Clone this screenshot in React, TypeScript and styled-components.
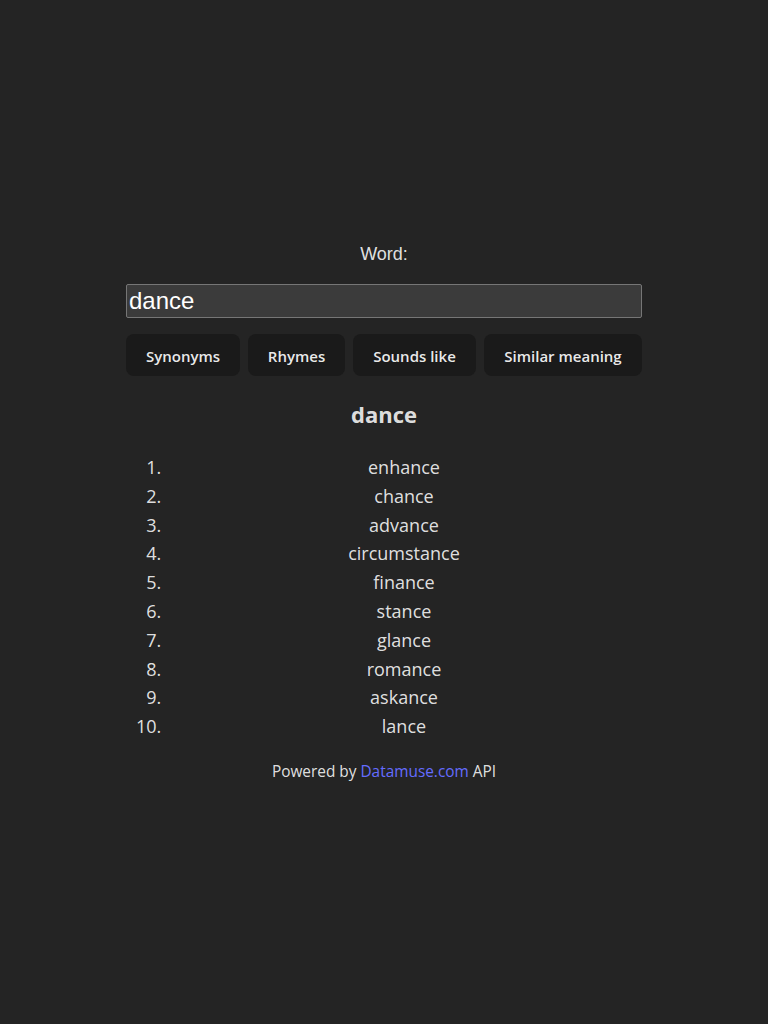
import React from "react";
import styled, { createGlobalStyle } from "styled-components";

const Global = createGlobalStyle`
  html, body { margin: 0; padding: 0; }
  body {
    background: #242424;
    color: rgba(255,255,255,0.87);
    font-family: "Open Sans", "Noto Sans", sans-serif;
    line-height: 1.5;
    -webkit-font-smoothing: antialiased;
  }
`;

const Page = styled.div`
  min-height: 100vh;
  display: flex;
  align-items: center;
  justify-content: center;
`;

const Panel = styled.div`
  width: 516px;
  padding-top: 3px;
  display: flex;
  flex-direction: column;
  align-items: stretch;
  text-align: center;
`;

const Label = styled.label`
  font-family: "Liberation Sans", Arial, sans-serif;
  font-size: 18px;
  line-height: 22px;
  color: rgba(255,255,255,0.87);
  margin-bottom: 19px;
`;

const Input = styled.input`
  box-sizing: border-box;
  width: 100%;
  height: 34px;
  padding: 0 2px;
  font-family: "Liberation Sans", Arial, sans-serif;
  font-size: 24px;
  color: #fff;
  background: #3b3b3b;
  border: 1px solid #767676;
  border-radius: 2px;
  outline: none;
`;

const ButtonRow = styled.div`
  display: flex;
  justify-content: space-between;
  margin-top: 16px;
`;

const Button = styled.button<{ $w: number }>`
  box-sizing: border-box;
  width: ${(p) => p.$w}px;
  height: 42px;
  border: 1px solid transparent;
  border-radius: 8px;
  background: #1a1a1a;
  color: rgba(255,255,255,0.92);
  font-family: "Open Sans", "Noto Sans", sans-serif;
  font-size: 15px;
  font-weight: 600;
  padding: 2px 0 0;
  cursor: pointer;
`;

const Heading = styled.h2`
  margin: 22px 0 0;
  font-size: 22px;
  line-height: 32px;
  font-weight: 700;
`;

const List = styled.ol`
  margin: 23px 0 0;
  padding-left: 40px;
  font-size: 18px;
  line-height: 28.8px;
`;

const Item = styled.li`
  text-align: center;
`;

const Footer = styled.p`
  margin: 19px 0 0;
  font-size: 15.4px;
  line-height: 24px;
`;

const Link = styled.a`
  color: #646cff;
  font-weight: 500;
  text-decoration: none;
`;

const words = [
  "enhance",
  "chance",
  "advance",
  "circumstance",
  "finance",
  "stance",
  "glance",
  "romance",
  "askance",
  "lance",
];

export default function App() {
  return (
    <>
      <Global />
      <Page>
        <Panel>
          <Label htmlFor="word">Word:</Label>
          <Input id="word" defaultValue="dance" />
          <ButtonRow>
            <Button $w={114}>Synonyms</Button>
            <Button $w={97}>Rhymes</Button>
            <Button $w={123}>Sounds like</Button>
            <Button $w={158}>Similar meaning</Button>
          </ButtonRow>
          <Heading>dance</Heading>
          <List>
            {words.map((w) => (
              <Item key={w}>{w}</Item>
            ))}
          </List>
          <Footer>
            Powered by <Link href="#">Datamuse.com</Link> API
          </Footer>
        </Panel>
      </Page>
    </>
  );
}
